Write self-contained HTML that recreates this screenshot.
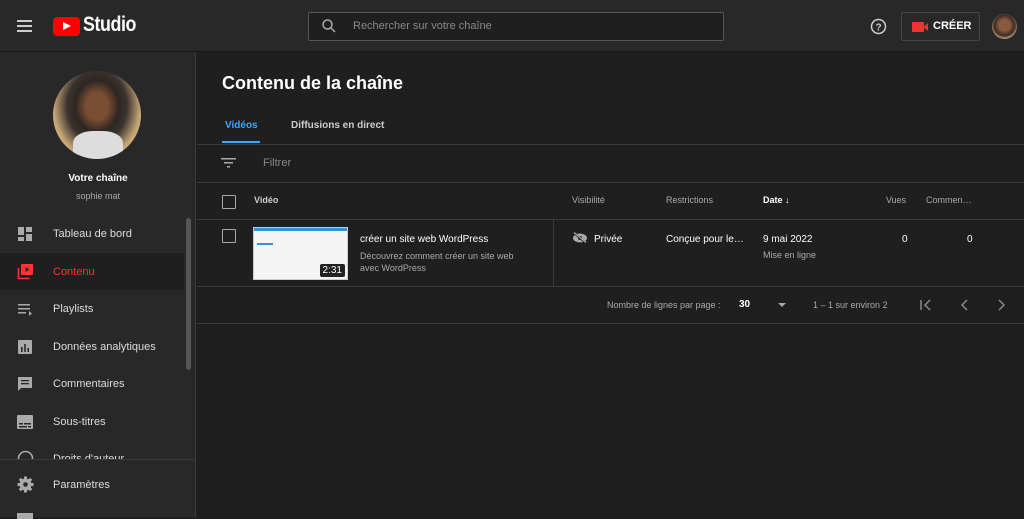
<!DOCTYPE html>
<html><head><meta charset="utf-8"><style>
*{box-sizing:border-box;margin:0;padding:0}
body{width:1024px;height:517px;overflow:hidden;background:#1f1f1f;font-family:"Liberation Sans",sans-serif;color:#fff;position:relative}
.hdr{position:absolute;left:0;top:0;width:1024px;height:52px;background:#282828;border-bottom:1px solid #1a1a1a}
.side{position:absolute;left:0;top:52px;width:196px;height:465px;background:#282828;border-right:1px solid #3a3a3a}
.abs{position:absolute}
.nav{position:absolute;left:0;width:184px;height:37px;display:flex;align-items:center;font-size:11px;color:#ddd}
.nav svg{position:absolute;left:17px}
.nav span{position:absolute;left:53px}
.line{position:absolute;height:1px;background:#3a3a3a}
.th{position:absolute;top:195px;font-size:9px;color:#aaa}
.td{position:absolute;font-size:10px;color:#fff}
.cb{position:absolute;width:14px;height:14px;border:1.5px solid #aaa;border-radius:1px}
</style></head><body>
<div class="hdr">
 <div class="abs" style="left:17px;top:20px;width:15px;height:2px;background:#ccc;box-shadow:0 5px 0 #ccc,0 10px 0 #ccc"></div>
 <div class="abs" style="left:53px;top:17px;width:27px;height:19px;background:#f00;border-radius:4px"></div>
 <div class="abs" style="left:63px;top:22px;width:0;height:0;border-left:8px solid #fff;border-top:4.5px solid transparent;border-bottom:4.5px solid transparent"></div>
 <div class="abs" style="left:83px;top:13px;font-size:21px;font-weight:bold;letter-spacing:-0.5px;transform:scaleX(0.85);transform-origin:left">Studio</div>
 <div class="abs" style="left:308px;top:12px;width:416px;height:29px;border:1px solid #555;border-radius:2px;background:#1f1f1f"></div>
 <svg class="abs" style="left:321px;top:18px" width="16" height="16" viewBox="0 0 16 16"><circle cx="6.5" cy="6.5" r="4.5" stroke="#aaa" stroke-width="1.5" fill="none"/><path d="M10 10l4 4" stroke="#aaa" stroke-width="1.5"/></svg>
 <div class="abs" style="left:353px;top:20px;font-size:11px;color:#888">Rechercher sur votre chaîne</div>
 <svg class="abs" style="left:870px;top:18px" width="17" height="17" viewBox="0 0 17 17"><circle cx="8.5" cy="8.5" r="7" stroke="#ccc" stroke-width="1.5" fill="none"/><text x="8.5" y="12.5" font-size="10" fill="#ccc" text-anchor="middle" font-family="Liberation Sans" font-weight="bold">?</text></svg>
 <div class="abs" style="left:901px;top:12px;width:79px;height:29px;border:1px solid #444;border-radius:2px"></div>
 <div class="abs" style="left:912px;top:22px;width:12px;height:10px;background:#e33"></div>
 <div class="abs" style="left:923px;top:23px;width:0;height:0;border-right:5px solid #e33;border-top:4px solid transparent;border-bottom:4px solid transparent"></div>
 <div class="abs" style="left:933px;top:20px;font-size:11px;font-weight:bold">CRÉER</div>
 <div class="abs" style="left:992px;top:14px;width:25px;height:25px;border-radius:50%;background:radial-gradient(circle at 50% 45%,#8a5a3c 30%,#3a2c24 55%,#c9a77a 75%)"></div>
</div>
<div class="side">
 <div class="abs" style="left:53px;top:19px;width:88px;height:88px;border-radius:50%;background:radial-gradient(ellipse at 50% 40%,#7a4e33 18%,#2e2622 35%,#3a322e 48%,#c8a878 70%);overflow:hidden"><div style="position:absolute;left:20px;top:60px;width:50px;height:30px;background:#ddd;border-radius:40% 40% 0 0"></div></div>
 <div class="abs" style="left:0;width:196px;top:121px;text-align:center;font-size:10px;font-weight:bold">Votre chaîne</div>
 <div class="abs" style="left:0;width:196px;top:139px;text-align:center;font-size:9px;color:#aaa">sophie mat</div>
 <div class="abs" style="left:186px;top:166px;width:5px;height:152px;background:#555;border-radius:3px"></div>
 <div class="nav" style="top:163px"><svg width="16" height="16" viewBox="0 0 16 16" fill="#aaa"><rect x="1" y="1" width="6" height="8"/><rect x="9" y="1" width="6" height="5"/><rect x="1" y="11" width="6" height="4"/><rect x="9" y="8" width="6" height="7"/></svg><span>Tableau de bord</span></div>
 <div class="nav" style="top:201px;background:#1f1f1f;color:#f33"><svg width="17" height="17" viewBox="0 0 17 17"><rect x="4" y="1" width="12" height="11" rx="1" fill="#f33"/><path d="M8.5 4v5l4-2.5z" fill="#282828"/><path d="M1.5 5v10.5h11" stroke="#f33" stroke-width="1.6" fill="none"/></svg><span>Contenu</span></div>
 <div class="nav" style="top:238px"><svg width="17" height="16" viewBox="0 0 17 16" fill="#aaa"><rect x="1" y="3" width="12" height="1.5"/><rect x="1" y="7" width="12" height="1.5"/><rect x="1" y="11" width="8" height="1.5"/><path d="M12 10v5l3-2.5z"/></svg><span>Playlists</span></div>
 <div class="nav" style="top:276px"><svg width="16" height="16" viewBox="0 0 16 16"><rect x="1" y="1" width="14" height="14" rx="1" fill="#aaa"/><rect x="4" y="8" width="1.6" height="5" fill="#282828"/><rect x="7.2" y="5" width="1.6" height="8" fill="#282828"/><rect x="10.4" y="9" width="1.6" height="4" fill="#282828"/></svg><span>Données analytiques</span></div>
 <div class="nav" style="top:313px"><svg width="16" height="16" viewBox="0 0 16 16"><path d="M1 1h14v11H4l-3 3z" fill="#aaa"/><rect x="4" y="4" width="8" height="1.3" fill="#282828"/><rect x="4" y="7" width="8" height="1.3" fill="#282828"/></svg><span>Commentaires</span></div>
 <div class="nav" style="top:351px"><svg width="16" height="14" viewBox="0 0 16 14"><rect x="0" y="0" width="16" height="14" rx="1" fill="#aaa"/><rect x="2" y="8" width="4" height="1.5" fill="#282828"/><rect x="7" y="8" width="7" height="1.5" fill="#282828"/><rect x="2" y="11" width="8" height="1.5" fill="#282828"/><rect x="11" y="11" width="3" height="1.5" fill="#282828"/></svg><span>Sous-titres</span></div>
 <div class="abs" style="left:0;top:389px;width:184px;height:18px;overflow:hidden;font-size:11px;color:#ddd">
  <svg class="abs" style="left:17px;top:9px" width="17" height="17" viewBox="0 0 17 17"><circle cx="8.5" cy="8.5" r="7" stroke="#aaa" stroke-width="1.6" fill="none"/></svg>
  <span class="abs" style="left:53px;top:12px">Droits d'auteur</span>
 </div>
 <div class="line" style="left:0;top:407px;width:196px;background:#3a3a3a"></div>
 <div class="nav" style="top:414px"><svg width="17" height="17" viewBox="0 0 17 17"><circle cx="8.5" cy="8.5" r="6" fill="#aaa"/><g stroke="#aaa" stroke-width="3"><path d="M8.5 0.5v16M0.5 8.5h16M2.8 2.8l11.4 11.4M14.2 2.8L2.8 14.2"/></g><circle cx="8.5" cy="8.5" r="2.3" fill="#282828"/></svg><span>Paramètres</span></div>
 <div class="abs" style="left:17px;top:461px;width:16px;height:6px;background:#aaa"></div>
</div>
<div class="abs" style="left:222px;top:73px;font-size:18px;font-weight:bold">Contenu de la chaîne</div>
<div class="abs" style="left:225px;top:120px;font-size:10px;font-weight:bold;color:#3ea6ff">Vidéos</div>
<div class="abs" style="left:222px;top:141px;width:38px;height:2px;background:#3ea6ff"></div>
<div class="abs" style="left:291px;top:120px;font-size:10px;font-weight:bold;color:#ccc">Diffusions en direct</div>
<div class="line" style="left:197px;top:144px;width:827px"></div>
<svg class="abs" style="left:221px;top:157px" width="15" height="12" viewBox="0 0 15 12" fill="#aaa"><rect x="0" y="1" width="15" height="1.5"/><rect x="3" y="5" width="9" height="1.5"/><rect x="6" y="9" width="3" height="1.5"/></svg>
<div class="abs" style="left:263px;top:157px;font-size:11px;color:#888">Filtrer</div>
<div class="line" style="left:197px;top:182px;width:827px"></div>
<div class="cb" style="left:222px;top:195px"></div>
<div class="th" style="left:254px;font-weight:bold;color:#ccc">Vidéo</div>
<div class="th" style="left:572px">Visibilité</div>
<div class="th" style="left:666px">Restrictions</div>
<div class="th" style="left:763px;color:#fff;font-weight:bold">Date ↓</div>
<div class="th" style="left:886px">Vues</div>
<div class="th" style="left:926px">Commen…</div>
<div class="line" style="left:197px;top:219px;width:827px"></div>
<div class="cb" style="left:222px;top:229px"></div>
<div class="abs" style="left:253px;top:227px;width:95px;height:53px;background:#f4f4f4;border:1px solid #ccc"><div style="height:3px;background:#3b8ed8"></div><div style="margin:12px 0 0 3px;width:16px;height:2px;background:#3b8ed8"></div><div style="position:absolute;right:2px;bottom:2px;background:#222;border-radius:2px;font-size:10px;padding:1px 3px;color:#fff">2:31</div></div>
<div class="td" style="left:360px;top:234px">créer un site web WordPress</div>
<div class="td" style="left:360px;top:250px;font-size:9px;color:#aaa;line-height:12px">Découvrez comment créer un site web<br>avec WordPress</div>
<div class="abs" style="left:553px;top:220px;width:1px;height:66px;background:#3a3a3a"></div>
<svg class="abs" style="left:572px;top:232px" width="16" height="12" viewBox="0 0 16 12"><ellipse cx="8" cy="6" rx="7" ry="4.5" fill="#aaa"/><circle cx="8" cy="6" r="2" fill="#1f1f1f"/><path d="M2 1l12 10" stroke="#1f1f1f" stroke-width="2"/><path d="M2 0.5l12 10" stroke="#aaa" stroke-width="1.2"/></svg>
<div class="td" style="left:594px;top:234px">Privée</div>
<div class="td" style="left:666px;top:234px">Conçue pour le…</div>
<div class="td" style="left:763px;top:234px">9 mai 2022</div>
<div class="td" style="left:763px;top:250px;font-size:9px;color:#aaa">Mise en ligne</div>
<div class="td" style="left:902px;top:234px">0</div>
<div class="td" style="left:967px;top:234px">0</div>
<div class="line" style="left:197px;top:286px;width:827px"></div>
<div class="abs" style="left:607px;top:300px;font-size:9px;color:#aaa">Nombre de lignes par page :</div>
<div class="abs" style="left:739px;top:299px;font-size:10px;font-weight:bold">30</div>
<div class="abs" style="left:778px;top:303px;border-top:4px solid #aaa;border-left:4px solid transparent;border-right:4px solid transparent"></div>
<div class="abs" style="left:813px;top:300px;font-size:9px;color:#aaa">1 – 1 sur environ 2</div>
<svg class="abs" style="left:918px;top:298px" width="100" height="14" viewBox="0 0 100 14" stroke="#888" stroke-width="1.5" fill="none"><path d="M3 2v10M12 2l-5 5 5 5"/><path d="M49 2l-5 5 5 5"/><path d="M81 2l5 5-5 5"/></svg>
<div class="line" style="left:197px;top:323px;width:827px"></div>
</body></html>
